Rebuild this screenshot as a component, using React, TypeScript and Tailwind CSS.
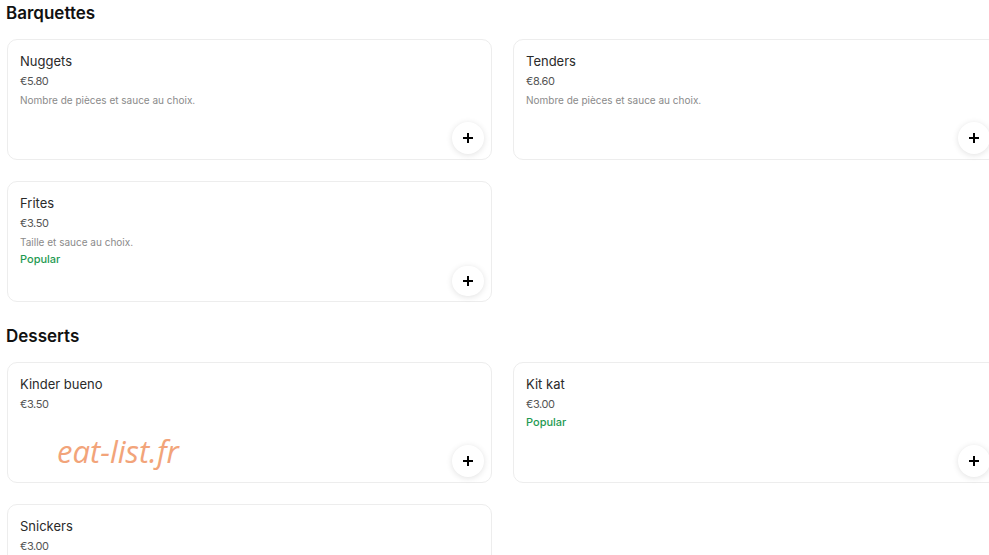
import React from 'react';

type Item = {
  name: string;
  price: string;
  description?: string;
  popular?: boolean;
};

type Section = {
  title: string;
  items: Item[];
};

const sections: Section[] = [
  {
    title: 'Barquettes',
    items: [
      { name: 'Nuggets', price: '€5.80', description: 'Nombre de pièces et sauce au choix.' },
      { name: 'Tenders', price: '€8.60', description: 'Nombre de pièces et sauce au choix.' },
      { name: 'Frites', price: '€3.50', description: 'Taille et sauce au choix.', popular: true },
    ],
  },
  {
    title: 'Desserts',
    items: [
      { name: 'Kinder bueno', price: '€3.50' },
      { name: 'Kit kat', price: '€3.00', popular: true },
      { name: 'Snickers', price: '€3.00' },
    ],
  },
];

const PlusIcon = () => (
  <svg width="12" height="12" viewBox="0 0 12 12" fill="none">
    <path d="M6 1v10M1 6h10" stroke="#000" strokeWidth="2" />
  </svg>
);

const ItemCard: React.FC<{ item: Item }> = ({ item }) => (
  <div className="flex h-[121px] flex-col rounded-[10px] border border-[#ededed] bg-white pl-[12px] pr-[7px] pt-[14px] pb-[5px]">
    <div className="text-[13px] leading-[15px] text-[#2a2a2a]">{item.name}</div>
    <div className="mt-[6px] text-[11px] leading-[13px] tracking-[-0.4px] text-[#555]">{item.price}</div>
    {item.description && (
      <div className="mt-[6px] text-[10px] leading-[12px] text-[#8a8a8a]">{item.description}</div>
    )}
    {item.popular && (
      <div className="mt-[5px] text-[11px] font-medium leading-[13px] text-[#1f9a52]">Popular</div>
    )}
    <button className="mt-auto flex h-[32px] w-[32px] items-center justify-center self-end rounded-full bg-white shadow-[0_1px_6px_rgba(0,0,0,0.12)]">
      <PlusIcon />
    </button>
  </div>
);

export default function App() {
  return (
    <div className="relative h-[555px] w-[989px] overflow-hidden bg-white font-['Inter',sans-serif]">
      <div className="pl-[7px]">
        {sections.map(section => (
          <div key={section.title}>
            <h2 className="-ml-[1px] pt-[3px] text-[17px] font-semibold leading-[20px] text-[#111]">
              {section.title}
            </h2>
            <div className="mt-[16px] grid w-[991px] grid-cols-[485px_485px] gap-x-[21px] gap-y-[21px] pb-[21px]">
              {section.items.map(item => (
                <ItemCard key={item.name} item={item} />
              ))}
            </div>
          </div>
        ))}
      </div>
      {/* site watermark */}
      <div className="absolute left-[57px] top-[432px] font-['Open_Sans',sans-serif] text-[31px] font-normal italic leading-[38px] text-[#f2a47a]">
        eat-list.fr
      </div>
    </div>
  );
}
